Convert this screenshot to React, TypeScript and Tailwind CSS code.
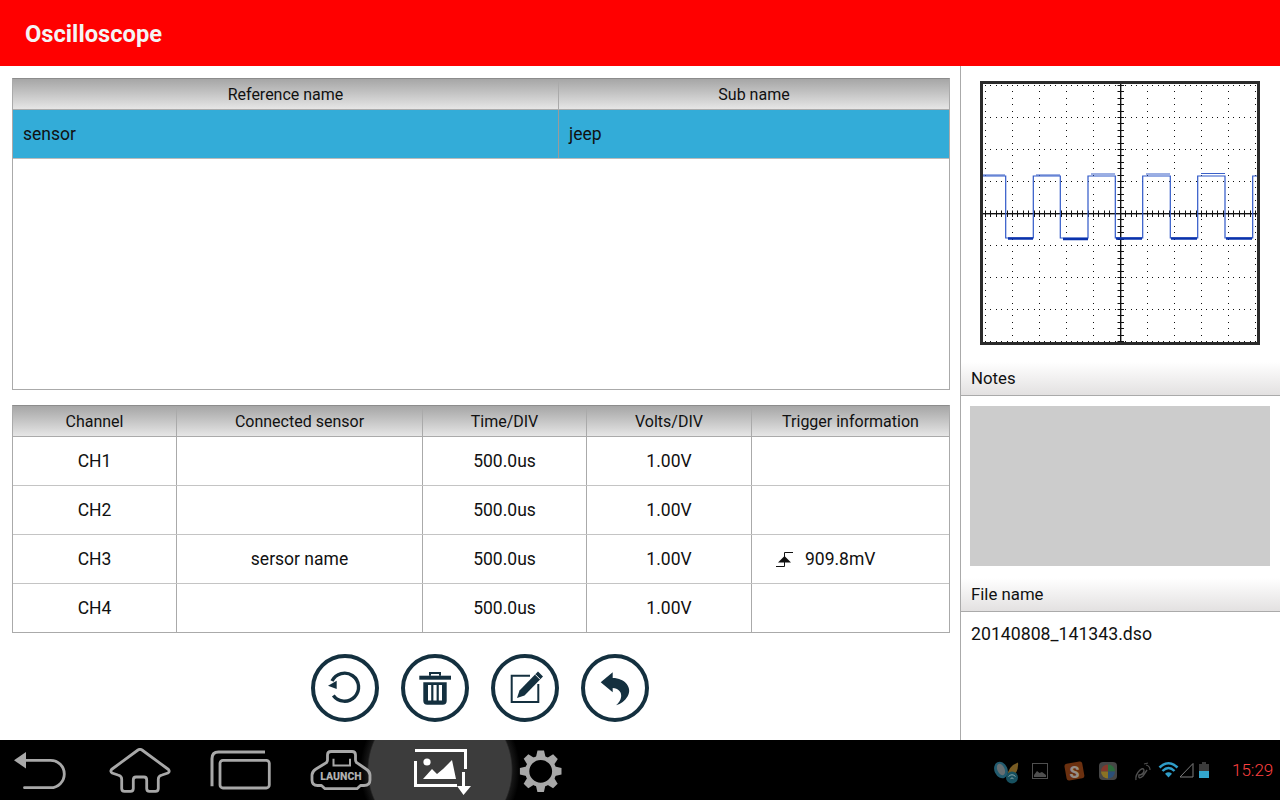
const dotXs = Array.from({ length: 51 }, (_, i) => 5.4 * i + 5);
const dotYs = Array.from({ length: 41 }, (_, i) => 6.4 * i + 4);
const gridX = [5, 32, 59, 86, 113, 167, 194, 221, 248, 275];
const gridY = [4, 36, 68, 100, 164, 196, 228, 260];

function Scope() {
  return (
    <svg width="280" height="264" viewBox="0 0 280 264" className="block">
      <rect x="1.5" y="1.5" width="277" height="261" fill="#fff" stroke="#2b2b2b" strokeWidth="3" />
      {gridY.map((y) =>
        dotXs.map((x) => <rect key={`h${y}-${x}`} x={Math.round(x)} y={y} width="1" height="1" fill="#111" />)
      )}
      {gridX.map((x) =>
        dotYs.map((y) => <rect key={`v${x}-${y}`} x={x} y={Math.round(y)} width="1" height="1" fill="#111" />)
      )}
      <rect x="3" y="132" width="274" height="1.4" fill="#111" />
      <rect x="140" y="3" width="1.4" height="258" fill="#111" />
      {dotXs.map((x) => <rect key={`tx${x}`} x={Math.round(x)} y="129.5" width="1" height="6.5" fill="#111" />)}
      {dotYs.map((y) => <rect key={`ty${y}`} x="137.5" y={Math.round(y)} width="6.5" height="1" fill="#111" />)}
      <path
        d="M3 95H25.7V157H53.3V95H80.3V157H108V95H135.3V157H162.7V95H190.3V157H217.7V95H245V157H272.7V95H277"
        fill="none"
        stroke="#2f58c8"
        strokeWidth="1.2"
      />
      <path
        d="M28 157.5H53M83 158H108M136 157.5H162M191 157.5H217M246 157.5H272"
        stroke="#0a32ac"
        strokeWidth="2.4"
        fill="none"
      />
      <path d="M3 94H25M56 94H80M111 93H135M166 93H190M221 92.5H245" stroke="#3a60c8" strokeWidth="1.2" fill="none" />
    </svg>
  );
}

function RoundButton({ children }: { children: React.ReactNode }) {
  return (
    <div className="w-[68px] h-[68px] rounded-full border-4 border-[#14303f] flex items-center justify-center">
      <svg width="60" height="60" viewBox="4 4 60 60" className="block">
        {children}
      </svg>
    </div>
  );
}

const ink = "#14303f";

const Cell = ({ className, children }: { className: string; children?: React.ReactNode }) => (
  <div className={`flex items-center justify-center h-full border-r border-[#aaaaaa] last:border-r-0 ${className}`}>{children}</div>
);

const cols = ["w-[164px]", "w-[246px]", "w-[164px]", "w-[165px]", "flex-1"];

function Row({ cells, last }: { cells: React.ReactNode[]; last?: boolean }) {
  return (
    <div className={`flex h-[49px] text-[17.5px] ${last ? "" : "border-b border-[#c4c4c4]"}`}>
      {cells.map((c, i) => (
        <Cell key={i} className={cols[i]}>{c}</Cell>
      ))}
    </div>
  );
}

const headerClass = "pt-px bg-gradient-to-b from-[#a6a6a6] to-[#e6e6e6] border-b border-[#aaaaaa]";
const sideHeader = "h-[34px] flex items-center pl-[10px] text-[16.8px] bg-gradient-to-b from-white to-[#e3e1e1] border-b border-[#aaaaaa]";

export default function App() {
  const rows = ["CH1", "CH2", "CH3", "CH4"];
  return (
    <div className="w-[1280px] h-[800px] flex flex-col bg-white overflow-hidden text-[16px] text-[#111] font-['Roboto',sans-serif]">
      <header className="h-[66px] bg-[#ff0000] flex items-center pl-[25px] pt-[3px]">
        <h1 className="text-[23.7px] font-bold text-[#f4f4f4]">Oscilloscope</h1>
      </header>

      <main className="flex h-[674px]">
        <section className="w-[960px] pl-3 pt-3">
          <div className="w-[938px] h-[312px] border border-[#aaaaaa] border-t-[#8c8c8c]">
            <div className={`flex h-[31px] ${headerClass}`}>
              <div className="w-[546px] flex items-center justify-center border-r border-[#aaaaaa]">Reference name</div>
              <div className="flex-1 flex items-center justify-center">Sub name</div>
            </div>
            <div className="flex h-[49px] text-[17.5px] bg-[#33acd8] border-b border-[#bbbbbb]">
              <div className="w-[546px] flex items-center pl-[10px] border-r border-[#9a9a9a]">sensor</div>
              <div className="flex-1 flex items-center pl-[10px]">jeep</div>
            </div>
          </div>

          <div className="w-[938px] h-[228px] mt-[15px] border border-[#aaaaaa] border-t-[#8c8c8c]">
            <div className={`flex h-[31px] ${headerClass}`}>
              {["Channel", "Connected sensor", "Time/DIV", "Volts/DIV", "Trigger information"].map((h, i) => (
                <Cell key={h} className={cols[i]}>{h}</Cell>
              ))}
            </div>
            {rows.map((r, i) => (
              <Row
                key={r}
                last={i === 3}
                cells={[
                  r,
                  i === 2 ? "sersor name" : "",
                  "500.0us",
                  "1.00V",
                  i === 2 ? (
                    <div className="w-full flex items-center pl-[23px]">
                      <svg width="18" height="16" viewBox="774 551 18 16" className="block">
                        <path d="M775 566.5H783.5V552.5H792" fill="none" stroke="#111" strokeWidth="1" />
                        <path d="M777 562.5H790L783.5 556Z" fill="#111" />
                      </svg>
                      <span className="ml-[12px]">909.8mV</span>
                    </div>
                  ) : (
                    ""
                  ),
                ]}
              />
            ))}
          </div>

          <div className="w-[936px] mt-[21px] flex justify-center gap-[22px]">
            <RoundButton>
              <path d="M21 27A14 14 0 1 1 22.3 41.5" fill="none" stroke={ink} strokeWidth="3.4" />
              <path d="M17 31.7L25.7 26.7V35Z" fill={ink} />
            </RoundButton>
            <RoundButton>
              <path d="M29 21.7V19H39V21.7" fill="none" stroke={ink} strokeWidth="2" />
              <rect x="18.3" y="21.7" width="31.7" height="4" fill={ink} />
              <path d="M22.3 28.3H45.7V46.7A4 4 0 0 1 41.7 50.7H26.3A4 4 0 0 1 22.3 46.7Z" fill={ink} />
              <rect x="27" y="31" width="3.2" height="15.5" fill="#fff" />
              <rect x="32.4" y="31" width="3.2" height="15.5" fill="#fff" />
              <rect x="37.8" y="31" width="3.2" height="15.5" fill="#fff" />
            </RoundButton>
            <RoundButton>
              <path d="M39 21.7H20.7V48H47.3V30" fill="none" stroke={ink} strokeWidth="2" />
              <path d="M47 17.5L52 22.5L33.5 41.5L26 44L28.5 36.5Z" fill={ink} />
              <path d="M44.2 20.4L49.2 25.4" stroke="#fff" strokeWidth="1" />
            </RoundButton>
            <RoundButton>
              <path d="M19.7 28.3L31.7 18.3V24C44 24 52 34 46.5 42.5C44 47 40 50 35 51.3C42 46 43 35 31.7 34V38.3Z" fill={ink} />
            </RoundButton>
          </div>
        </section>

        <aside className="w-[320px] border-l border-[#aaaaaa] flex flex-col">
          <div className="ml-[19px] mt-[15px] mb-[17px]">
            <Scope />
          </div>
          <div className={sideHeader}>Notes</div>
          <div className="ml-[9px] mt-[10px] w-[300px] h-[160px] bg-[#cccccc]" />
          <div className={`${sideHeader} mt-[12px]`}>File name</div>
          <div className="pl-[10px] mt-[9px] text-[17.7px]">20140808_141343.dso</div>
        </aside>
      </main>

      <footer className="relative h-[60px] bg-black flex items-start overflow-hidden">
        <div className="absolute left-[360px] top-[-50px] w-[160px] h-[160px] rounded-full bg-[radial-gradient(circle_closest-side,#3c3c3c_89%,#161616_91%,#000000_100%)]" />
        <svg width="56" height="50" viewBox="12 748 56 50" className="relative block ml-[12px] mt-[8px]">
          <path d="M24 760.3H50.6A13.7 13.7 0 0 1 50.6 787.7H24.5" fill="none" stroke="#a8a8a8" strokeWidth="2.8" strokeLinecap="round" />
          <path d="M14 760.3L26 752V768.5Z" fill="#a8a8a8" />
        </svg>
        <svg width="64" height="50" viewBox="108 748 64 50" className="relative block ml-[40px] mt-[8px]">
          <path
            d="M138 750L111.5 769.5Q110 771.5 112 773L118 775Q121.7 776 121.7 779V788.5Q121.7 791.3 124.5 791.3H130.5Q133.3 791.3 133.3 788.5V780Q133.3 777 136 777H144Q146.7 777 146.7 780V788.5Q146.7 791.3 149.5 791.3H155.5Q158.3 791.3 158.3 788.5V779Q158.3 776 162 775L168 773Q170 771.5 168.5 769.5L142 750Q140 748.7 138 750Z"
            fill="none"
            stroke="#a8a8a8"
            strokeWidth="2.8"
            strokeLinejoin="round"
          />
        </svg>
        <svg width="63" height="50" viewBox="209 748 63 50" className="relative block ml-[37px] mt-[8px]">
          <path d="M265 752H218.5Q212 752 212 758.7V786.3" fill="none" stroke="#a8a8a8" strokeWidth="3" />
          <rect x="220" y="760.3" width="49.3" height="27.7" rx="3" fill="none" stroke="#a8a8a8" strokeWidth="2.8" />
        </svg>
        <svg width="62" height="50" viewBox="310 748 62 50" className="relative block ml-[38px] mt-[8px]">
          <path
            d="M331 751.5H352Q355.5 751.5 355.5 755V760Q355.5 762.5 358 763.5L366 769Q370 771.5 370 775V780Q370 785.5 364 785.5H360.5L357 788.7H325L321.5 785.5H317.5Q312 785.5 312 780V775Q312 771.5 316 769L325 763.5Q327.5 762.5 327.5 760V755Q327.5 751.5 331 751.5Z"
            fill="none"
            stroke="#a8a8a8"
            strokeWidth="2.8"
            strokeLinejoin="round"
          />
          <path d="M333.5 758.7V765.5H350V758.7" fill="none" stroke="#a8a8a8" strokeWidth="2" />
          <text x="341" y="779.5" textAnchor="middle" fontSize="10.5" fontWeight="900" fill="#b0b0b0" fontFamily="Roboto, sans-serif">LAUNCH</text>
        </svg>
        <svg width="60" height="50" viewBox="413 748 60 50" className="relative block ml-[41px] mt-[8px]">
          <path d="M415 750.5H465.5V769M415.5 761V785.5H457" fill="none" stroke="#fff" strokeWidth="3" />
          <path d="M462 772H465V786H471L463.5 795L457 786H462Z" fill="#fff" />
          <circle cx="427" cy="762" r="3.6" fill="#fff" />
          <path d="M423 779L432 769L437 774L443 769L452 760L456 779Z" fill="#fff" />
        </svg>
        <svg width="46" height="50" viewBox="518 748 46 50" className="relative block ml-[45px] mt-[8px]">
          <circle cx="540.7" cy="771.3" r="13.5" fill="none" stroke="#a8a8a8" strokeWidth="4.2" />
          {[0, 45, 90, 135, 180, 225, 270, 315].map((a) => (
            <path key={a} d="M536 757L537.5 750.5H544L545.5 757Z" fill="#a8a8a8" transform={`rotate(${a} 540.7 771.3)`} />
          ))}
        </svg>
        <svg width="226" height="40" viewBox="990 750 226 40" className="relative block ml-[426px] mt-[10px]">
          <g opacity="0.75">
            <path d="M1007 777Q1008 766 1018 762.5Q1019 772 1012 776Z" fill="#a07a2e" />
            <ellipse cx="1001" cy="770" rx="6.5" ry="8.5" transform="rotate(-25 1001 770)" fill="#2e7a94" />
            <ellipse cx="1001" cy="769.5" rx="3.6" ry="6" transform="rotate(-25 1001 769.5)" fill="#8a9498" />
            <circle cx="1012" cy="777.5" r="6" fill="#1f6c80" />
            <path d="M1008.5 776.5Q1012 773 1015.5 776.5M1010.5 778.7Q1012 777 1013.5 778.7" stroke="#cfeef2" strokeWidth="0.9" fill="none" />
            <rect x="1032.5" y="763.5" width="15" height="15" fill="none" stroke="#6a6a6a" />
            <path d="M1034 777V775L1037 771L1039.5 773L1042 772L1046 775V777Z" fill="#6a6a6a" />
            <rect x="1065.5" y="762.5" width="18" height="17" rx="2.5" transform="rotate(-10 1074.5 771.5)" fill="#8f4015" />
            <text x="1074.5" y="777.5" textAnchor="middle" fontSize="16" fontWeight="900" fill="#c9bdb2" fontFamily="Roboto, sans-serif">S</text>
            <rect x="1099" y="762" width="18" height="18" rx="4" fill="#5e5e5e" />
            <path d="M1108 764.5A7 7 0 0 0 1101 771.5L1108 771.5Z" fill="#b04a3a" />
            <path d="M1108 764.5A7 7 0 0 1 1115 771.5L1108 771.5Z" fill="#3a9050" />
            <path d="M1101 771.5A7 7 0 0 0 1108 778.5L1108 771.5Z" fill="#b89830" />
            <path d="M1115 771.5A7 7 0 0 1 1108 778.5L1108 771.5Z" fill="#3a6aa0" />
            <path d="M1136 780Q1135 775 1140 770Q1144 767 1144 771Q1143 775 1139 775Q1138 780 1143 776L1147 770" fill="none" stroke="#6a6a6a" strokeWidth="1.4" />
            <path d="M1146 765Q1150 766 1150 770M1144 764L1148 763" fill="none" stroke="#6a6a6a" strokeWidth="1.2" />
          </g>
          <path d="M1159.5 767.5Q1168.5 759 1177.5 767.5" fill="none" stroke="#2f9dc8" strokeWidth="2.6" />
          <path d="M1162.5 771Q1168.5 765 1174.5 771" fill="none" stroke="#2f9dc8" strokeWidth="2.4" />
          <path d="M1165 773.7L1168.5 777.5L1172 773.7Q1168.5 771 1165 773.7Z" fill="#2f9dc8" />
          <path d="M1193 763.5V777H1180Z" fill="none" stroke="#7c7c7c" />
          <rect x="1199" y="764" width="10" height="14" fill="#33a5cc" />
          <rect x="1199" y="764" width="10" height="7" fill="#3b3b3b" />
          <rect x="1202" y="762" width="4" height="2" fill="#3b3b3b" />
        </svg>
        <span className="relative ml-[16px] mt-[20px] text-[17px] leading-[20px] font-light text-[#ff4040]">15:29</span>
      </footer>
    </div>
  );
}
